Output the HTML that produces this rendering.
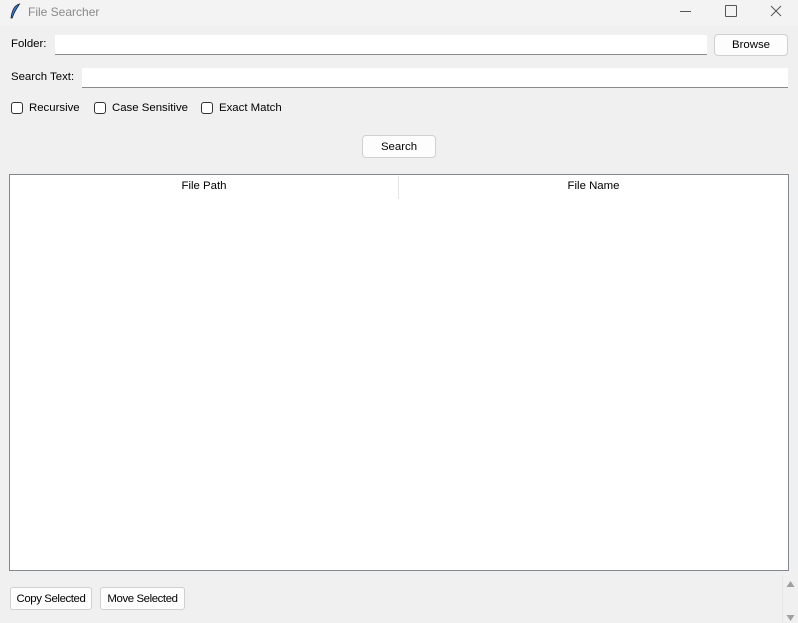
<!DOCTYPE html>
<html><head><style>
body{margin:0;width:798px;height:623px;background:#f0f0f0;font-family:"Liberation Sans",sans-serif;font-size:11.4px;color:#000;position:relative;overflow:hidden}
.a{position:absolute}
.ent{background:#fff;border-bottom:1px solid #8a8a8a;box-sizing:border-box}
.btn{background:#fdfdfd;border:1px solid #d0d0d0;border-radius:4px;box-sizing:border-box;text-align:center}
.cb{width:12px;height:12px;border:1px solid #333;border-radius:3px;background:#fff;box-sizing:border-box}
</style></head><body>
<div class="a" style="left:0;top:0;width:798px;height:26px;background:#f3f3f3"></div>
<svg class="a" style="left:9px;top:3px" width="12" height="17" viewBox="0 0 12 17"><path d="M10.5 1C6 2 3 7 2 15L3.2 15C5 9 8 5 10.5 1Z" fill="#3b7ad8" stroke="#123" stroke-width="0.8"/></svg>
<div class="a" style="left:28px;top:5px;color:#8a8a8a;font-size:12px">File Searcher</div>
<div class="a" style="left:680px;top:11px;width:11px;height:1px;background:#555"></div>
<div class="a" style="left:725px;top:5px;width:10px;height:10px;border:1px solid #555;border-radius:1px"></div>
<svg class="a" style="left:770px;top:5px" width="12" height="12"><path d="M1 1L11 11M11 1L1 11" stroke="#555" stroke-width="1"/></svg>
<div class="a" style="left:11px;top:38px">Folder:</div>
<div class="a ent" style="left:55px;top:35px;width:652px;height:20px"></div>
<div class="a btn" style="left:714px;top:34px;width:74px;height:22px;line-height:20px">Browse</div>
<div class="a" style="left:11px;top:71px">Search Text:</div>
<div class="a ent" style="left:82px;top:68px;width:706px;height:20px"></div>
<div class="a cb" style="left:11px;top:102px"></div><div class="a" style="left:29px;top:102px">Recursive</div>
<div class="a cb" style="left:94px;top:102px"></div><div class="a" style="left:112px;top:102px">Case Sensitive</div>
<div class="a cb" style="left:201px;top:102px"></div><div class="a" style="left:219px;top:102px">Exact Match</div>
<div class="a btn" style="left:362px;top:135px;width:74px;height:23px;line-height:22px">Search</div>
<div class="a" style="left:9px;top:174px;width:780px;height:397px;background:#fff;border:1px solid #828790;box-sizing:border-box"></div>
<div class="a" style="left:10px;top:180px;width:388px;text-align:center">File Path</div>
<div class="a" style="left:399px;top:180px;width:389px;text-align:center">File Name</div>
<div class="a" style="left:398px;top:176px;width:1px;height:23px;background:#e3e3e3"></div>
<div class="a btn" style="left:10px;top:587px;width:82px;height:23px;line-height:22px;border-radius:3px;letter-spacing:-0.4px">Copy Selected</div>
<div class="a btn" style="left:100px;top:587px;width:85px;height:23px;line-height:22px;border-radius:3px;letter-spacing:-0.4px">Move Selected</div>
<div class="a" style="left:782px;top:575px;width:16px;height:48px;background:#f0f0f0;border-left:1px solid #e6e6e6"></div>
<svg class="a" style="left:786px;top:580px" width="9" height="8"><path d="M4.5 1L8.5 7H0.5Z" fill="#a0a0a0"/></svg>
<svg class="a" style="left:786px;top:614px" width="9" height="8"><path d="M0.5 1H8.5L4.5 7Z" fill="#a0a0a0"/></svg>
</body></html>
